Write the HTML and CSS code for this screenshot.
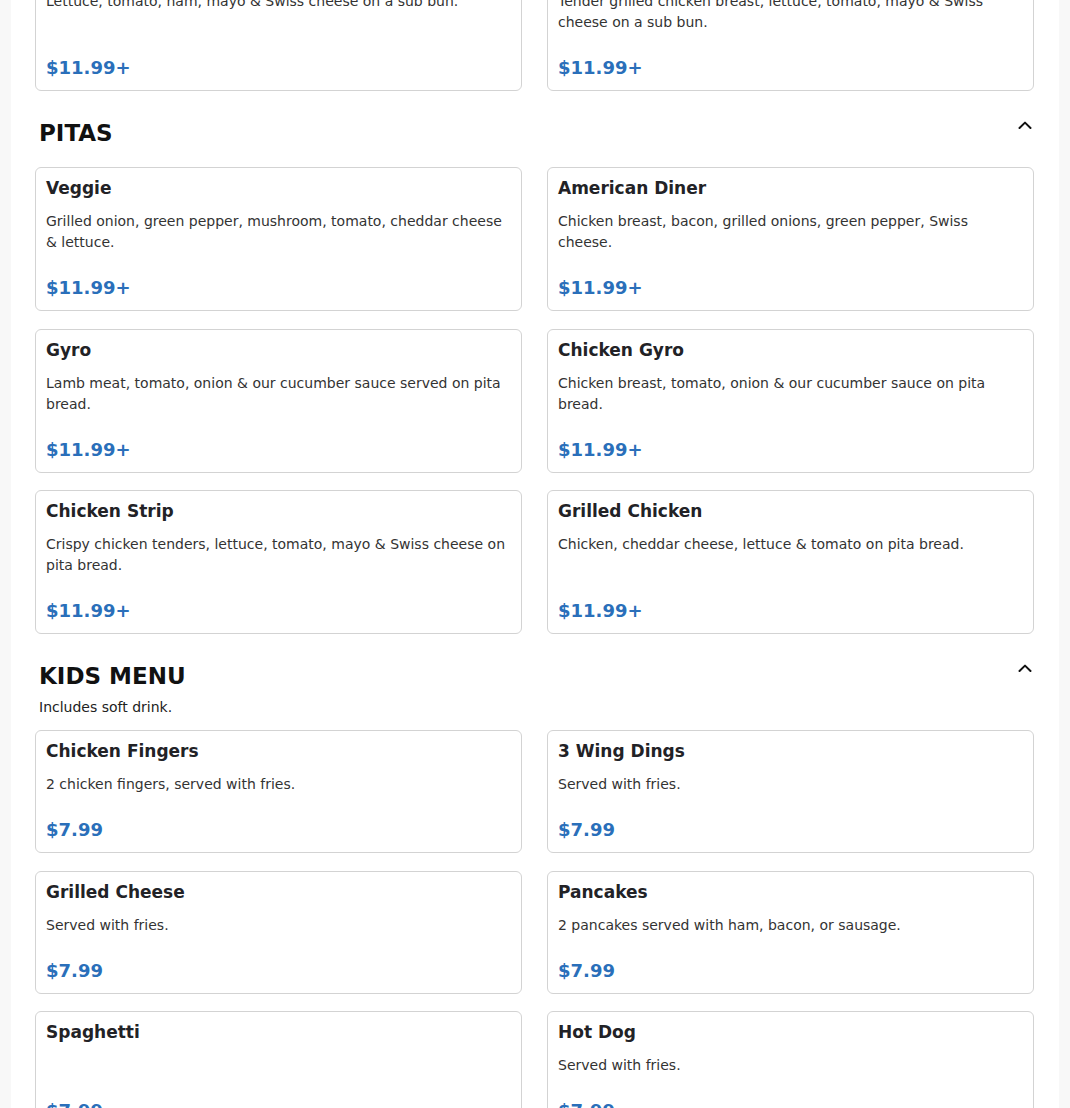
FILE: index.html
```html
<!DOCTYPE html>
<html lang="en">
<head>
<meta charset="utf-8">
<title>Menu</title>
<link rel="stylesheet" href="styles.css">
</head>
<body>
<main class="page">
  <section class="section section-scrolled">
    <div class="grid">
      <article class="card">
        <h3 class="card-title">Ham &amp; Swiss</h3>
        <p class="card-desc">Lettuce, tomato, ham, mayo &amp; Swiss cheese on a sub bun.</p>
        <div class="card-price">$11.99+</div>
      </article>
      <article class="card">
        <h3 class="card-title">Grilled Chicken</h3>
        <p class="card-desc">Tender grilled chicken breast, lettuce, tomato, mayo &amp; Swiss cheese on a sub bun.</p>
        <div class="card-price">$11.99+</div>
      </article>
    </div>
  </section>

  <section class="section">
    <header class="section-head section-head-plain">
      <div class="section-text">
        <h2 class="section-title">PITAS</h2>
      </div>
      <svg class="chevron" width="14" height="8" viewBox="0 0 14 8" aria-hidden="true"><polyline points="1.5,7 7,1.6 12.5,7" fill="none" stroke="#111" stroke-width="2" stroke-linecap="round" stroke-linejoin="round"/></svg>
    </header>
    <div class="grid">
      <article class="card">
        <h3 class="card-title">Veggie</h3>
        <p class="card-desc">Grilled onion, green pepper, mushroom, tomato, cheddar cheese &amp; lettuce.</p>
        <div class="card-price">$11.99+</div>
      </article>
      <article class="card">
        <h3 class="card-title">American Diner</h3>
        <p class="card-desc">Chicken breast, bacon, grilled onions, green pepper, Swiss cheese.</p>
        <div class="card-price">$11.99+</div>
      </article>
      <article class="card">
        <h3 class="card-title">Gyro</h3>
        <p class="card-desc">Lamb meat, tomato, onion &amp; our cucumber sauce served on pita bread.</p>
        <div class="card-price">$11.99+</div>
      </article>
      <article class="card">
        <h3 class="card-title">Chicken Gyro</h3>
        <p class="card-desc">Chicken breast, tomato, onion &amp; our cucumber sauce on pita bread.</p>
        <div class="card-price">$11.99+</div>
      </article>
      <article class="card">
        <h3 class="card-title">Chicken Strip</h3>
        <p class="card-desc">Crispy chicken tenders, lettuce, tomato, mayo &amp; Swiss cheese on pita bread.</p>
        <div class="card-price">$11.99+</div>
      </article>
      <article class="card">
        <h3 class="card-title">Grilled Chicken</h3>
        <p class="card-desc">Chicken, cheddar cheese, lettuce &amp; tomato on pita bread.</p>
        <div class="card-price">$11.99+</div>
      </article>
    </div>
  </section>

  <section class="section">
    <header class="section-head">
      <div class="section-text">
        <h2 class="section-title">KIDS MENU</h2>
        <p class="section-sub">Includes soft drink.</p>
      </div>
      <svg class="chevron" width="14" height="8" viewBox="0 0 14 8" aria-hidden="true"><polyline points="1.5,7 7,1.6 12.5,7" fill="none" stroke="#111" stroke-width="2" stroke-linecap="round" stroke-linejoin="round"/></svg>
    </header>
    <div class="grid">
      <article class="card">
        <h3 class="card-title">Chicken Fingers</h3>
        <p class="card-desc">2 chicken fingers, served with fries.</p>
        <div class="card-price">$7.99</div>
      </article>
      <article class="card">
        <h3 class="card-title">3 Wing Dings</h3>
        <p class="card-desc">Served with fries.</p>
        <div class="card-price">$7.99</div>
      </article>
      <article class="card">
        <h3 class="card-title">Grilled Cheese</h3>
        <p class="card-desc">Served with fries.</p>
        <div class="card-price">$7.99</div>
      </article>
      <article class="card">
        <h3 class="card-title">Pancakes</h3>
        <p class="card-desc">2 pancakes served with ham, bacon, or sausage.</p>
        <div class="card-price">$7.99</div>
      </article>
      <article class="card">
        <h3 class="card-title">Spaghetti</h3>
        <p class="card-desc"></p>
        <div class="card-price">$7.99</div>
      </article>
      <article class="card">
        <h3 class="card-title">Hot Dog</h3>
        <p class="card-desc">Served with fries.</p>
        <div class="card-price">$7.99</div>
      </article>
    </div>
  </section>
</main>
</body>
</html>
```

FILE: styles.css
```css
* {
  box-sizing: border-box;
}

html, body {
  margin: 0;
  padding: 0;
}

body {
  background: #f8f8f8;
  font-family: "DejaVu Sans", "Liberation Sans", sans-serif;
  color: #222;
}

.page {
  width: 1048px;
  margin: 0 auto;
  background: #ffffff;
  padding: 0 25px 40px 24px;
  min-height: 1200px;
}

.section {
  padding-top: 29px;
}

.section-scrolled {
  padding-top: 0;
  margin-top: -53px;
}

.section-head {
  display: flex;
  justify-content: space-between;
  align-items: flex-start;
  padding: 0 2px 0 4px;
  margin-bottom: 12px;
}

.section-head-plain {
  padding-bottom: 9px;
}

.section-title {
  margin: 0;
  font-size: 23px;
  line-height: 26px;
  font-weight: 700;
  color: #111;
}

.section-sub {
  margin: 8px 0 0;
  font-size: 14px;
  line-height: 21px;
  color: #222;
}

.chevron {
  display: block;
  margin-top: 1px;
}

.grid {
  display: grid;
  grid-template-columns: 1fr 1fr;
  column-gap: 25px;
  row-gap: 17.5px;
}

.card {
  display: flex;
  flex-direction: column;
  border: 1px solid #d3d3d3;
  border-radius: 6px;
  padding: 10px;
  background: #fff;
}

.card-title {
  margin: 0 0 13px;
  font-size: 17px;
  line-height: 20px;
  font-weight: 700;
  color: #222226;
}

.card-desc {
  margin: 0;
  font-size: 14px;
  line-height: 21px;
  color: #333;
  min-height: 21px;
}

.card-price {
  margin-top: auto;
  padding-top: 23px;
  font-size: 18px;
  line-height: 24px;
  font-weight: 700;
  color: #2a6fba;
}
```
